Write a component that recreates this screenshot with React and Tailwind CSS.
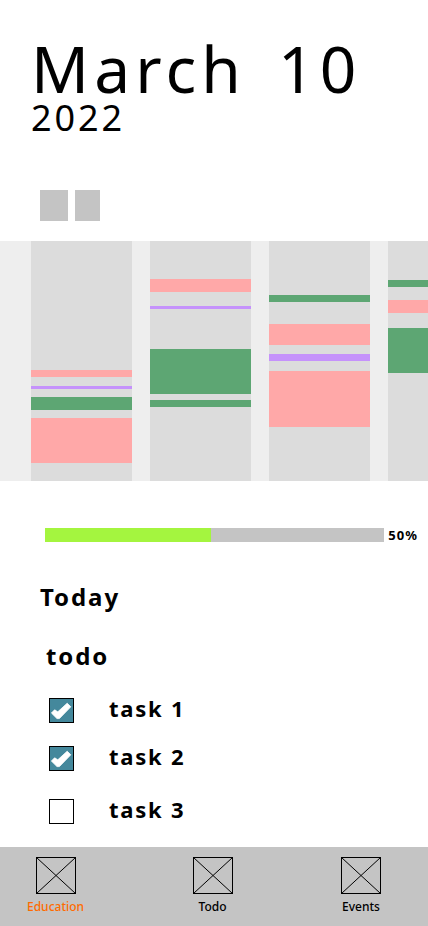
import { useState } from 'react';

const PINK = 'bg-[#ffa8a8]';
const PURPLE = 'bg-[#c592fb]';
const GREEN = 'bg-[#5da673]';

const DAYS = [
  [
    { start: 129, length: 7, color: PINK },
    { start: 145, length: 3, color: PURPLE },
    { start: 156, length: 13, color: GREEN },
    { start: 177, length: 45, color: PINK },
  ],
  [
    { start: 38, length: 13, color: PINK },
    { start: 65, length: 3, color: PURPLE },
    { start: 108, length: 45, color: GREEN },
    { start: 159, length: 7, color: GREEN },
  ],
  [
    { start: 54, length: 7, color: GREEN },
    { start: 83, length: 21, color: PINK },
    { start: 113, length: 7, color: PURPLE },
    { start: 130, length: 56, color: PINK },
  ],
  [
    { start: 39, length: 7, color: GREEN },
    { start: 59, length: 13, color: PINK },
    { start: 87, length: 45, color: GREEN },
  ],
];

function Day({ events }) {
  return (
    <li className="flex w-[101px] shrink-0 flex-col bg-[#dcdcdc]">
      {events.map((event, i) => {
        const previousEnd = i === 0 ? 0 : events[i - 1].start + events[i - 1].length;
        return (
          <div
            key={event.start}
            className={event.color}
            style={{ marginTop: event.start - previousEnd, height: event.length }}
          />
        );
      })}
    </li>
  );
}

function Task({ name, done }) {
  const [checked, setChecked] = useState(done);
  return (
    <li className="last:mt-[5px]">
      <label className="flex items-start gap-[35px]">
        <span className="grid">
          <input
            type="checkbox"
            checked={checked}
            onChange={() => setChecked(!checked)}
            className="col-start-1 row-start-1 size-[25px] appearance-none border border-black bg-white checked:bg-[#44889c]"
          />
          {checked && (
            <svg viewBox="0 0 25 25" className="pointer-events-none col-start-1 row-start-1 size-[25px]" aria-hidden="true">
              <path d="M2.4 15 5.6 11.8 8.8 13.8 18.2 5.2 21.8 8.8 10.4 20.6 8 20.6Z" fill="#fff" stroke="#fff" strokeWidth="0.8" strokeLinejoin="round" />
            </svg>
          )}
        </span>
        <span className="text-[22px] leading-5 font-bold tracking-[0.08em]">{name}</span>
      </label>
    </li>
  );
}

function NavItem({ label, active }) {
  return (
    <a
      href="#"
      aria-current={active ? 'page' : undefined}
      className={`flex flex-col items-center gap-1.5 ${active ? 'text-[#ff6b00]' : 'text-black'}`}
    >
      <svg viewBox="0 0 40 37" className="h-[37px] w-10 text-black" fill="none" stroke="currentColor" aria-hidden="true">
        <rect x="0.5" y="0.5" width="39" height="36" />
        <path d="M0.5 0.5 39.5 36.5M39.5 0.5 0.5 36.5" />
      </svg>
      <span className="text-xs leading-[14px] font-medium">{label}</span>
    </a>
  );
}

export default function App() {
  return (
    <div className="flex min-h-screen flex-col bg-white font-['Noto_Sans',sans-serif] text-black">
      <header className="px-[31px] pt-[35px]">
        <h1 className="flex gap-8 text-[64px] leading-[68px] tracking-[0.08em]">
          <span>March</span>
          <span>10</span>
        </h1>
        <p className="text-4xl leading-[30px] tracking-[0.08em]">2022</p>
      </header>

      <div className="mt-[57px] flex gap-[7px] px-10">
        <button type="button" aria-label="Previous" className="h-[31px] w-7 bg-[#c4c4c4]" />
        <button type="button" aria-label="Next" className="h-[31px] w-[25px] bg-[#c4c4c4]" />
      </div>

      <ul className="mt-5 flex h-60 gap-[18px] overflow-hidden bg-[#eeeeee] pl-[31px]">
        {DAYS.map((events, i) => (
          <Day key={i} events={events} />
        ))}
      </ul>

      <div className="mt-[47px] flex items-center gap-1 pr-[10px] pl-[45px]">
        <div
          role="progressbar"
          aria-label="Progress"
          aria-valuenow={50}
          className="h-3.5 flex-1 bg-[#c4c4c4]"
        >
          <div className="h-full w-[49%] bg-[#a4f53f]" />
        </div>
        <span className="text-[13px] leading-[14px] font-bold tracking-[0.08em]">50%</span>
      </div>

      <main className="flex flex-col px-10 pb-5">
        <h2 className="mt-[39px] text-2xl leading-8 font-bold tracking-[0.08em]">Today</h2>
        <h3 className="mt-[27px] pl-1.5 text-2xl leading-8 font-bold tracking-[0.08em]">todo</h3>
        <ul className="mt-[26px] flex flex-col gap-[23px] pl-[9px]">
          <Task name="task 1" done />
          <Task name="task 2" done />
          <Task name="task 3" done={false} />
        </ul>
      </main>

      <nav className="mt-auto flex justify-between bg-[#c4c4c4] pt-2.5 pr-[47px] pb-3 pl-[27px]">
        <NavItem label="Education" active />
        <NavItem label="Todo" />
        <NavItem label="Events" />
      </nav>
    </div>
  );
}
